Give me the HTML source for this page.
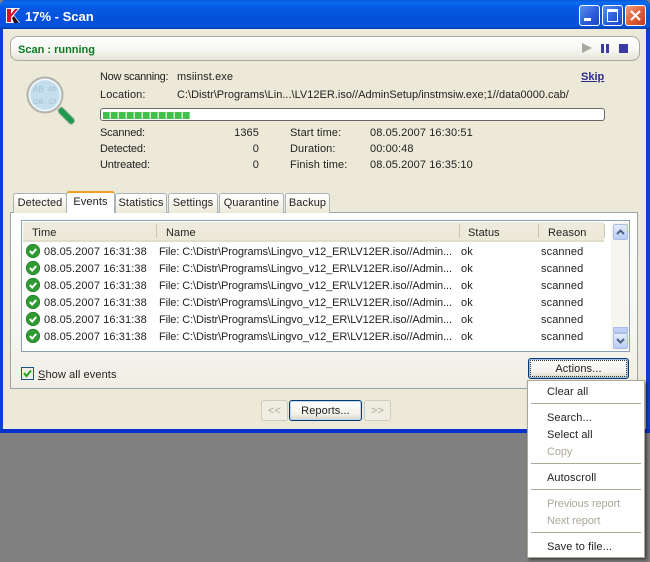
<!DOCTYPE html>
<html><head><meta charset="utf-8"><style>
html,body{margin:0;padding:0;background:#808080}
#r{position:relative;width:650px;height:562px;overflow:hidden;background:#808080;font:11px "Liberation Sans",sans-serif;color:#222;letter-spacing:.1px}
#r div,#r svg{position:absolute}
.t{white-space:nowrap;line-height:14px;height:14px}
.g{color:#aca899;letter-spacing:-.1px}
.f{letter-spacing:-.1px}
.l{letter-spacing:-.15px}
.tab{top:193px;height:19px;background:linear-gradient(#fff,#f4f2e8 60%,#ece9d8);border:1px solid #a9b4b8;border-bottom:0;border-radius:3px 3px 0 0;text-align:center;line-height:19px;box-sizing:content-box}
.hs{top:224px;width:1px;height:14px;background:#c9c6b5}
.sep{left:531px;width:110px;height:1px;background:#aca899}
.btn{border:1px solid #003c74;border-radius:3px;background:linear-gradient(#fff,#f2f1ea 70%,#d8d5c6);text-align:center;box-sizing:border-box}
.dis{border:1px solid #cfccbd;border-radius:3px;background:#f0eee3;color:#aca899;text-align:center;box-sizing:border-box}
.wb{top:5px;width:21px;height:21px;border:1px solid #fff;border-radius:3px;box-sizing:border-box}
</style></head><body><div id="r">
<!-- window -->
<div style="left:0;top:0;width:650px;height:433px;background:#0a3fd0;border-radius:6px 6px 0 0"></div>
<div style="left:0;top:0;width:650px;height:29px;border-radius:6px 6px 0 0;background:linear-gradient(#0a58dc 0,#0a6cf0 3px,#0558e4 8px,#0450d8 20px,#0654dc 26px,#0340b0 29px)"></div>
<div style="left:3px;top:29px;width:643px;height:400px;background:#ece9d8"></div>
<div style="left:0;top:429px;width:650px;height:4px;background:#0831c9"></div>
<!-- title -->
<svg style="left:6px;top:8px" width="15" height="16" viewBox="0 0 15 16"><path d="M0 0h14l-6 7 6 8H0z" fill="#fff"/><path d="M1 1h4v5l4-5h3L5 9v5H1z" fill="#d8102c"/><path d="M6 10l2-2 5 7H8z" fill="#111"/></svg>
<div class="t" style="left:25px;top:10px;color:#fff;font-size:13px;font-weight:bold;letter-spacing:0">17% - Scan</div>
<div class="wb" style="left:579px;background:linear-gradient(135deg,#5c8cf0,#2a5ad8 60%,#1f48c0)"><div style="left:4px;top:12px;width:7px;height:3px;background:#fff"></div></div>
<div class="wb" style="left:602px;background:linear-gradient(135deg,#5c8cf0,#2a5ad8 60%,#1f48c0)"><div style="left:4px;top:3px;width:9px;height:9px;border:1px solid #fff;border-top-width:3px"></div></div>
<div class="wb" style="left:625px;background:linear-gradient(135deg,#f0a080,#e0603a 50%,#c63a1a)"><svg style="left:3px;top:3px" width="13" height="13" viewBox="0 0 13 13"><path d="M2 2l9 9M11 2l-9 9" stroke="#fff" stroke-width="2.2"/></svg></div>
<!-- status bar -->
<div style="left:10px;top:36px;width:630px;height:25px;box-sizing:border-box;border:1px solid #aaa99f;border-radius:8px;background:linear-gradient(#fff,#f8f8f5 50%,#e6e4d6)"></div>
<div class="t" style="left:18px;top:43px;color:#0a7a1e;font-weight:bold;letter-spacing:0">Scan : running</div>
<svg style="left:581px;top:42px" width="50" height="13" viewBox="0 0 50 13"><path d="M1 1l10 5-10 5z" fill="#a8a89c"/><path d="M20 2h3v9h-3zM25 2h3v9h-3z" fill="#3a3aa8"/><rect x="38" y="2" width="9" height="9" fill="#3a3aa8"/></svg>
<!-- magnifier -->
<svg style="left:24px;top:74px" width="54" height="54" viewBox="0 0 54 54"><path d="M34 36l3-3 2 1 11 11c1 2 0 4-2 5-1 .5-2 0-3-1L35 39z" fill="#1f9a50" stroke="#8fae98"/><circle cx="21" cy="21" r="17.500" fill="#cfe4f2" stroke="#b4b4ac" stroke-width="2"/><circle cx="21" cy="21" r="15.500" fill="#c4deee" stroke="#f0f6fa" stroke-width="1.500"/><text x="9" y="18" font-size="8" fill="#a0c2d6" font-family="Liberation Sans">AB</text><text x="24" y="17" font-size="7" fill="#a0c2d6" font-family="Liberation Sans">Ab</text><text x="9" y="30" font-size="7" fill="#a0c2d6" font-family="Liberation Sans">OB</text><text x="25" y="30" font-size="7" fill="#a0c2d6" font-family="Liberation Sans">Cf</text></svg>
<!-- info -->
<div class="t l" style="left:100px;top:70px;letter-spacing:-.3px">Now scanning:</div>
<div class="t" style="left:177px;top:70px">msiinst.exe</div>
<div class="t" style="left:581px;top:70px;color:#2b2b8c;font-weight:bold;text-decoration:underline;letter-spacing:0">Skip</div>
<div class="t" style="left:100px;top:88px">Location:</div>
<div class="t" style="left:177px;top:88px;letter-spacing:.01px">C:\Distr\Programs\Lin...\LV12ER.iso//AdminSetup/instmsiw.exe;1//data0000.cab/</div>
<div style="left:100px;top:108px;width:505px;height:13px;box-sizing:border-box;border:1px solid #686868;border-radius:3px;background:#fff"></div>
<div style="left:103px;top:112px;width:87px;height:7px;background:repeating-linear-gradient(90deg,#3fc24a 0,#3fc24a 6.500px,#c8eccb 6.500px,#c8eccb 8px)"></div>
<div class="t l" style="left:100px;top:126px;letter-spacing:-.2px">Scanned:</div><div class="t" style="left:200px;width:59px;text-align:right;top:126px">1365</div>
<div class="t l" style="left:100px;top:142px">Detected:</div><div class="t" style="left:200px;width:59px;text-align:right;top:142px">0</div>
<div class="t l" style="left:100px;top:158px">Untreated:</div><div class="t" style="left:200px;width:59px;text-align:right;top:158px">0</div>
<div class="t" style="left:290px;top:126px">Start time:</div><div class="t" style="left:370px;top:126px">08.05.2007 16:30:51</div>
<div class="t" style="left:290px;top:142px">Duration:</div><div class="t" style="left:370px;top:142px">00:00:48</div>
<div class="t" style="left:290px;top:158px">Finish time:</div><div class="t" style="left:370px;top:158px">08.05.2007 16:35:10</div>
<!-- tab panel -->
<div style="left:10px;top:212px;width:628px;height:177px;box-sizing:border-box;border:1px solid #9aa5a8;background:linear-gradient(#fff,#f6f5ef 70%,#f0eee4)"></div>
<div class="tab" style="left:13px;width:52px">Detected</div>
<div class="tab" style="left:115px;width:50px">Statistics</div>
<div class="tab" style="left:168px;width:48px">Settings</div>
<div class="tab" style="left:219px;width:63px">Quarantine</div>
<div class="tab" style="left:285px;width:43px">Backup</div>
<div style="left:66px;top:191px;width:49px;height:22px;box-sizing:border-box;background:#fff;border:1px solid #a9b4b8;border-top:2px solid #f0a020;border-bottom:0;border-radius:3px 3px 0 0;text-align:center;line-height:19px">Events</div>
<!-- list -->
<div style="left:21px;top:220px;width:609px;height:132px;box-sizing:border-box;border:1px solid #8aa0b4;background:#fff"></div>
<div style="left:23px;top:222px;width:581px;height:20px;background:linear-gradient(#efecdf,#ece9d8);border-bottom:2px solid #e0ddcc;box-sizing:border-box"></div>
<div class="hs" style="left:156px"></div><div class="hs" style="left:459px"></div><div class="hs" style="left:538px"></div><div class="hs" style="left:604px"></div>
<div class="t" style="left:32px;top:226px">Time</div><div class="t" style="left:166px;top:226px">Name</div><div class="t" style="left:468px;top:226px">Status</div><div class="t" style="left:548px;top:226px">Reason</div>
<!-- rows -->
<svg style="left:26px;top:244px" width="14" height="99" viewBox="0 0 14 99"><defs><g id="c"><circle cx="7" cy="7" r="6.800" fill="#2f9a32"/><circle cx="7" cy="7" r="6.800" fill="none" stroke="#1f7a28" stroke-width=".6"/><path d="M3.800 7l2.400 2.500 4-4.500" fill="none" stroke="#fff" stroke-width="2"/></g></defs><use href="#c" y="0"/><use href="#c" y="17"/><use href="#c" y="34"/><use href="#c" y="51"/><use href="#c" y="68"/><use href="#c" y="85"/></svg>
<div class="t" style="left:44px;top:245px">08.05.2007 16:31:38</div><div class="t f" style="left:159px;top:245px">File: C:\Distr\Programs\Lingvo_v12_ER\LV12ER.iso//Admin...</div><div class="t" style="left:461px;top:245px">ok</div><div class="t" style="left:541px;top:245px">scanned</div>
<div class="t" style="left:44px;top:262px">08.05.2007 16:31:38</div><div class="t f" style="left:159px;top:262px">File: C:\Distr\Programs\Lingvo_v12_ER\LV12ER.iso//Admin...</div><div class="t" style="left:461px;top:262px">ok</div><div class="t" style="left:541px;top:262px">scanned</div>
<div class="t" style="left:44px;top:279px">08.05.2007 16:31:38</div><div class="t f" style="left:159px;top:279px">File: C:\Distr\Programs\Lingvo_v12_ER\LV12ER.iso//Admin...</div><div class="t" style="left:461px;top:279px">ok</div><div class="t" style="left:541px;top:279px">scanned</div>
<div class="t" style="left:44px;top:296px">08.05.2007 16:31:38</div><div class="t f" style="left:159px;top:296px">File: C:\Distr\Programs\Lingvo_v12_ER\LV12ER.iso//Admin...</div><div class="t" style="left:461px;top:296px">ok</div><div class="t" style="left:541px;top:296px">scanned</div>
<div class="t" style="left:44px;top:313px">08.05.2007 16:31:38</div><div class="t f" style="left:159px;top:313px">File: C:\Distr\Programs\Lingvo_v12_ER\LV12ER.iso//Admin...</div><div class="t" style="left:461px;top:313px">ok</div><div class="t" style="left:541px;top:313px">scanned</div>
<div class="t" style="left:44px;top:330px">08.05.2007 16:31:38</div><div class="t f" style="left:159px;top:330px">File: C:\Distr\Programs\Lingvo_v12_ER\LV12ER.iso//Admin...</div><div class="t" style="left:461px;top:330px">ok</div><div class="t" style="left:541px;top:330px">scanned</div>
<!-- scrollbar -->
<div style="left:611px;top:222px;width:18px;height:128px;background:#f6f6ef"></div>
<div style="left:613px;top:224px;width:15px;height:16px;box-sizing:border-box;border:1px solid #a8bce8;border-radius:2px;background:linear-gradient(#e4ecfc,#b8ccf4)"></div>
<div style="left:613px;top:327px;width:15px;height:6px;background:#c0d0f4;border:1px solid #a8bce8;box-sizing:border-box"></div>
<div style="left:613px;top:333px;width:15px;height:16px;box-sizing:border-box;border:1px solid #a8bce8;border-radius:2px;background:linear-gradient(#e4ecfc,#b8ccf4)"></div>
<svg style="left:616px;top:228px" width="9" height="120" viewBox="0 0 9 120"><path d="M1 6l3.500-3.500L8 6" fill="none" stroke="#4d6185" stroke-width="2"/><path d="M1 111l3.500 3.500L8 111" fill="none" stroke="#4d6185" stroke-width="2"/></svg>
<!-- checkbox -->
<div style="left:21px;top:367px;width:13px;height:13px;box-sizing:border-box;border:1px solid #1c5180;background:#eeede4"></div>
<svg style="left:23px;top:369px" width="9" height="9" viewBox="0 0 9 9"><path d="M1 4l2.500 3L8 1.500" fill="none" stroke="#21a121" stroke-width="2"/></svg>
<div class="t" style="left:38px;top:368px"><u>S</u>how all events</div>
<!-- actions -->
<div class="btn" style="left:528px;top:358px;width:101px;height:21px;line-height:21px;box-shadow:inset 0 0 0 1px #a0b8dc;outline:1px dotted #333;outline-offset:-3px">Actions...</div>
<!-- nav -->
<div class="dis" style="left:261px;top:400px;width:27px;height:21px;line-height:21px">&lt;&lt;</div>
<div class="btn" style="left:289px;top:400px;width:73px;height:21px;line-height:21px;box-shadow:inset 0 0 0 1px #c4d4ec">Reports...</div>
<div class="dis" style="left:364px;top:400px;width:27px;height:21px;line-height:21px">&gt;&gt;</div>
<!-- menu -->
<div style="left:527px;top:380px;width:118px;height:178px;background:#fff;border:1px solid #aca899;box-sizing:border-box;box-shadow:2px 2px 3px rgba(0,0,0,.5)"></div>
<div class="t" style="left:547px;top:385px">Clear all</div>
<div class="sep" style="top:403px"></div>
<div class="t" style="left:547px;top:411px">Search...</div>
<div class="t" style="left:547px;top:428px">Select all</div>
<div class="t g" style="left:547px;top:445px">Copy</div>
<div class="sep" style="top:463px"></div>
<div class="t" style="left:547px;top:471px">Autoscroll</div>
<div class="sep" style="top:489px"></div>
<div class="t g" style="left:547px;top:497px">Previous report</div>
<div class="t g" style="left:547px;top:514px">Next report</div>
<div class="sep" style="top:532px"></div>
<div class="t" style="left:547px;top:540px">Save to file...</div>
</div></body></html>
